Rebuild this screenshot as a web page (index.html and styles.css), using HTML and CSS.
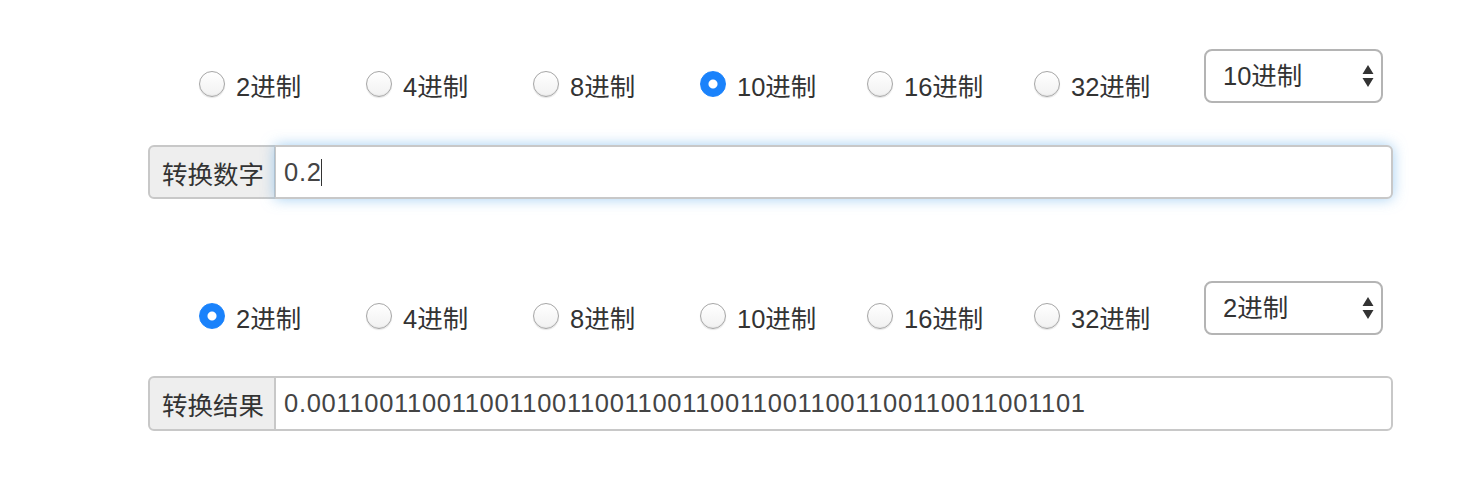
FILE: index.html
```html
<!DOCTYPE html>
<html lang="zh-CN">
  <head>
    <meta charset="UTF-8" />
    <title>进制转换</title>
    <link rel="stylesheet" href="styles.css">
  </head>
  <body>
    <div class="wrap">
      <section class="block">
        <div class="radios">
          <label class="opt"><input type="radio" name="from" value="2" />2进制</label>
          <label class="opt"><input type="radio" name="from" value="4" />4进制</label>
          <label class="opt"><input type="radio" name="from" value="8" />8进制</label>
          <label class="opt"><input type="radio" name="from" value="10" checked />10进制</label>
          <label class="opt"><input type="radio" name="from" value="16" />16进制</label>
          <label class="opt"><input type="radio" name="from" value="32" />32进制</label>
          <div class="sel">
            <select>
              <option>2进制</option>
              <option selected>10进制</option>
              <option>16进制</option>
            </select>
            <svg class="arrows" width="12" height="24" viewBox="0 0 12 24"><path d="M6 1 L11.5 10 L0.5 10 Z M0.5 14 L11.5 14 L6 23 Z" fill="#333"/></svg>
          </div>
        </div>
        <div class="group focus">
          <span class="addon">转换数字</span>
          <input class="field" type="text" value="0.2" autofocus />
          <span class="caret"></span>
        </div>
      </section>

      <section class="block second">
        <div class="radios">
          <label class="opt"><input type="radio" name="to" value="2" checked />2进制</label>
          <label class="opt"><input type="radio" name="to" value="4" />4进制</label>
          <label class="opt"><input type="radio" name="to" value="8" />8进制</label>
          <label class="opt"><input type="radio" name="to" value="10" />10进制</label>
          <label class="opt"><input type="radio" name="to" value="16" />16进制</label>
          <label class="opt"><input type="radio" name="to" value="32" />32进制</label>
          <div class="sel">
            <select>
              <option selected>2进制</option>
              <option>10进制</option>
              <option>16进制</option>
            </select>
            <svg class="arrows" width="12" height="24" viewBox="0 0 12 24"><path d="M6 1 L11.5 10 L0.5 10 Z M0.5 14 L11.5 14 L6 23 Z" fill="#333"/></svg>
          </div>
        </div>
        <div class="group">
          <span class="addon">转换结果</span>
          <input class="field" type="text" value="0.001100110011001100110011001100110011001100110011001101" readonly />
        </div>
      </section>
    </div>
  </body>
</html>
```

FILE: styles.css
```css
body {
  margin: 0;
  font-family: "Liberation Sans", "Noto Sans CJK SC", sans-serif;
  font-size: 25.5px;
  color: #333;
  background-color: #fff;
}
.wrap {
  width: 1245px;
  margin-left: 148px;
  padding-top: 49px;
}
.second {
  margin-top: 82px;
}
.radios {
  display: flex;
  align-items: center;
  height: 54px;
  padding-left: 51px;
}
.opt {
  display: flex;
  align-items: center;
  width: 167px;
  margin-top: 16px;
}
.opt input {
  appearance: none;
  -webkit-appearance: none;
  width: 26px;
  height: 26px;
  margin: 0 11px 0 0;
  border: 1px solid #a6a6a6;
  border-radius: 50%;
  background: linear-gradient(#fff, #f1f1f1);
  box-shadow: inset 0 -1px 1px rgba(0, 0, 0, 0.06), 0 1px 1px rgba(0, 0, 0, 0.1);
}
.opt input:checked {
  border-color: #1a82fb;
  background: radial-gradient(circle, #fff 0, #fff 4px, #1a82fb 5px);
  box-shadow: none;
}
.sel {
  position: relative;
  margin-left: 3px;
}
.sel select {
  appearance: none;
  -webkit-appearance: none;
  width: 179px;
  height: 54px;
  padding: 0 0 0 17px;
  font-family: inherit;
  font-size: 25.5px;
  color: #333;
  background-color: #fff;
  border: 2px solid #b4b4b4;
  border-radius: 8px;
}
.arrows {
  position: absolute;
  right: 9px;
  top: 15px;
}
.group {
  position: relative;
  display: flex;
  height: 54px;
  margin-top: 42px;
}
.second .group {
  margin-top: 41px;
  height: 55px;
}
.addon {
  display: flex;
  align-items: center;
  width: 127px;
  padding-left: 12px;
  box-sizing: border-box;
  background-color: #eee;
  border: 2px solid #c8c8c8;
  border-right-width: 1px;
  border-radius: 6px 0 0 6px;
}
.field {
  flex: 1;
  margin: 0;
  padding: 0 0 0 8px;
  font-family: inherit;
  font-size: 25.5px;
  letter-spacing: 0.7px;
  color: #444;
  caret-color: transparent;
  border: 2px solid #c8c8c8;
  border-left-width: 1px;
  border-radius: 0 6px 6px 0;
  outline: none;
}
.focus .field {
  box-shadow: 0 0 14px rgba(102, 175, 233, 0.6);
}
.caret {
  position: absolute;
  left: 173px;
  top: 14px;
  width: 1px;
  height: 27px;
  background-color: #333;
}
```
